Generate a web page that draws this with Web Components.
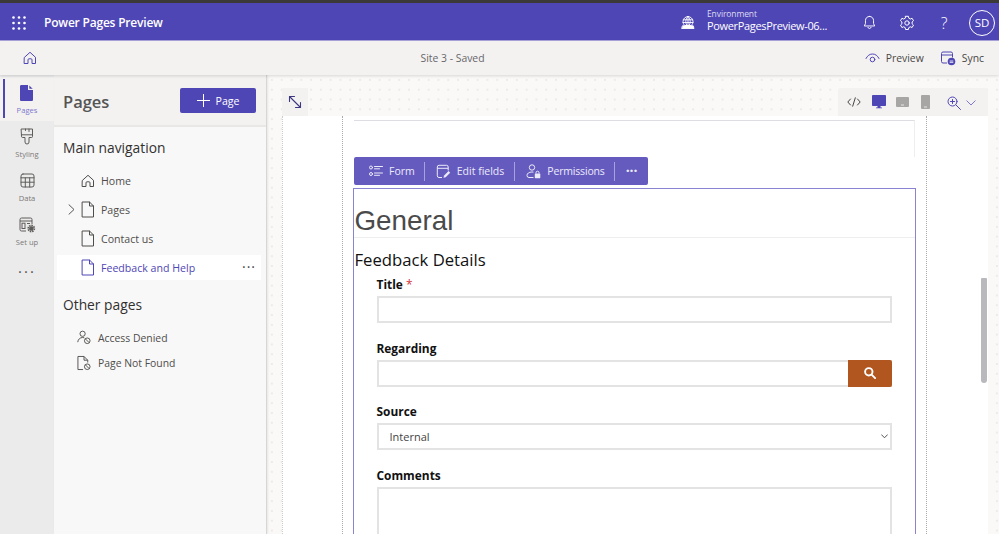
<!DOCTYPE html>
<html lang="en"><head><meta charset="utf-8"><title>Power Pages</title>
<style>
html,body{margin:0;padding:0;height:100%;overflow:hidden;background:#fff}
body{font-family:"Open Sans","Noto Sans",sans-serif;color:#323130}
</style></head><body>
<pp-app></pp-app>
<script>
const S='fill="none" stroke="currentColor" stroke-linecap="round" stroke-linejoin="round"';
const I={
 waffle:`<svg width="14" height="14" viewBox="0 0 14 14" fill="currentColor">${[1.5,7,12.5].flatMap(y=>[1.5,7,12.5].map(x=>`<circle cx="${x}" cy="${y}" r="1.3"/>`)).join('')}</svg>`,
 globe:`<svg width="16" height="16" viewBox="0 0 16 16" ${S} stroke-width=".9"><path d="M8 1.500a5 5 0 0 1 5 5c0 1.700-.7 3-1.800 4H4.800C3.700 9.500 3 8.200 3 6.500a5 5 0 0 1 5-5z"/><path d="M8 1.500C6.500 2.800 5.800 4.600 5.800 6.500s.5 3 1.100 4M8 1.500c1.500 1.300 2.200 3.100 2.200 5s-.5 3-1.100 4M8 1.500v9M3.300 4.800h9.400M3 7.500h10"/><path d="M2.800 10.800h10.400l.8 2.700H2z" fill="currentColor"/></svg>`,
 bell:`<svg width="15" height="15" viewBox="0 0 16 16" ${S}><path d="M8 1.500c-2.700 0-4.300 2-4.300 4.500v3L2.500 11.700h11L12.300 9V6c0-2.500-1.600-4.500-4.300-4.500z"/><path d="M6.300 13.200a1.800 1.800 0 0 0 3.400 0"/></svg>`,
 gear:`<svg width="16" height="16" viewBox="0 0 16 16" ${S}><circle cx="8" cy="8" r="2.200"/><path d="M6.600 1.300h2.800l.4 1.900 1.500.8 1.800-.7 1.400 2.400-1.400 1.300v1.800l1.400 1.300-1.400 2.400-1.800-.7-1.500.8-.4 1.900H6.600l-.4-1.900-1.500-.8-1.800.7-1.400-2.400 1.400-1.300V7.000L1.500 5.700l1.400-2.400 1.800.7 1.500-.8z"/></svg>`,
 home:`<svg width="14" height="14" viewBox="0 0 14 14" ${S}><path d="M1.500 6.300 7 1.300l5.500 5v6.200H9V8.800a1 1 0 0 0-1-1H6a1 1 0 0 0-1 1v3.700H1.500z"/></svg>`,
 eye:`<svg width="15" height="12" viewBox="0 0 15 12" ${S}><path d="M1 6.500C2.500 3.500 4.800 2 7.500 2S12.500 3.500 14 6.500"/><circle cx="7.500" cy="7.500" r="2.300"/></svg>`,
 sync:`<svg width="16" height="16" viewBox="0 0 16 16"><path d="M12.500 7.500V3.500a1.500 1.500 0 0 0-1.500-1.500H3A1.500 1.500 0 0 0 1.500 3.500v8A1.500 1.500 0 0 0 3 13h4M1.500 5h11" fill="none" stroke="currentColor"/><circle cx="11.500" cy="11.500" r="3.800" fill="currentColor"/><path d="M9.700 11h3.600M9.700 12.400h3.600" stroke="#fff" stroke-width=".8"/></svg>`,
 page:`<svg width="14" height="17" viewBox="0 0 14 17" ${S}><path d="M1.500 1h7l4 4v11h-11z"/><path d="M8.500 1v4h4"/></svg>`,
 pageFill:`<svg width="14" height="16" viewBox="0 0 14 16" fill="currentColor"><path d="M1.300 0H8v4.200c0 .5.400.9.900.900H13v9.600c0 .7-.6 1.300-1.300 1.300H1.300C.6 16 0 15.400 0 14.700V1.300C0 .6.600 0 1.300 0z"/><path d="M9.300.4 12.700 3.800H9.300z"/></svg>`,
 brush:`<svg width="14" height="17" viewBox="0 0 14 17" ${S}><path d="M1.500 1h11v7.500a1 1 0 0 1-1 1H9v4.500a2 2 0 0 1-4 0V9.500H2.500a1 1 0 0 1-1-1z"/><path d="M1.500 6.800h11M9 1v2.500M5.500 1v1.500"/></svg>`,
 table:`<svg width="15" height="15" viewBox="0 0 15 15" ${S}><rect x="1" y="1" width="13" height="13" rx="2"/><path d="M1 4.800h13M1 9.200h13M5.300 4.800V14M9.700 4.800V14"/></svg>`,
 setup:`<svg width="17" height="16" viewBox="0 0 17 16"><g fill="none" stroke="currentColor"><path d="M7 14H2.500A1.500 1.500 0 0 1 1 12.500v-10A1.500 1.500 0 0 1 2.500 1h9A1.500 1.500 0 0 1 13 2.500V7M1 4h12"/><rect x="3" y="6.200" width="3" height="5.300"/><path d="M8 6.500h3"/></g><circle cx="12.300" cy="11.500" r="3" fill="none" stroke="currentColor" stroke-width="1.800" stroke-dasharray="1.500 .8"/><circle cx="12.300" cy="11.500" r="2.200" fill="currentColor"/></svg>`,
 plus:`<svg width="13" height="13" viewBox="0 0 13 13" ${S}><path d="M6.500 0v13M0 6.500h13"/></svg>`,
 chev:`<svg width="7" height="11" viewBox="0 0 7 11" ${S}><path d="M1 .8 6 5.500 1 10.200"/></svg>`,
 user:`<svg width="15" height="15" viewBox="0 0 15 15"><g fill="none" stroke="currentColor"><circle cx="6" cy="3.500" r="2.800"/><path d="M.8 12.500c.3-3 2.400-5 5.200-5 .7 0 1.300.1 1.800.3"/><circle cx="11" cy="11" r="3"/><path d="m9 9 4 4"/></g></svg>`,
 pageBlock:`<svg width="15" height="16" viewBox="0 0 15 16"><g fill="none" stroke="currentColor"><path d="M6.500 15H1V1h6.500L11.500 5v2.500M7.500 1v4h4"/><circle cx="11" cy="12" r="3"/><path d="m9 10 4 4"/></g></svg>`,
 expand:`<svg width="14" height="14" viewBox="0 0 14 14" ${S} stroke-width="1.100"><path d="M1.500 1.500 12.500 12.500M1.500 6.500v-5h5M12.500 7.500v5h-5"/></svg>`,
 code:`<svg width="14" height="10" viewBox="0 0 14 10" ${S}><path d="M3.500 2 .8 5l2.700 3M10.500 2l2.700 3-2.700 3M8.300.8 5.700 9.200"/></svg>`,
 desktop:`<svg width="14" height="14" viewBox="0 0 14 14" fill="currentColor"><rect width="14" height="11" rx=".8"/><path d="M5.500 11h3v1.500h-3zM4 12.500h6v.7H4z"/></svg>`,
 tablet:`<svg width="13" height="10" viewBox="0 0 13 10"><rect width="13" height="10" rx="1" fill="currentColor"/><path d="M5 8h3" stroke="#fff" stroke-width=".7"/></svg>`,
 phone:`<svg width="9" height="14" viewBox="0 0 9 14"><rect width="9" height="14" rx="1" fill="currentColor"/><path d="M3 12h3" stroke="#fff" stroke-width=".7"/></svg>`,
 zoom:`<svg width="14" height="14" viewBox="0 0 14 14" ${S}><circle cx="5.500" cy="5.500" r="4.500"/><path d="M9 9l4.500 4.500M3.500 5.500h4M5.500 3.500v4"/></svg>`,
 down:`<svg width="10" height="6" viewBox="0 0 10 6" ${S}><path d="M.8.800 5 5 9.200.800"/></svg>`,
 ddown:`<svg width="7" height="5" viewBox="0 0 7 5" ${S}><path d="M.6.800 3.500 3.800 6.400.800"/></svg>`,
 form:`<svg width="14" height="12" viewBox="0 0 14 12" ${S}><circle cx="2" cy="2.500" r="1.500"/><circle cx="2" cy="9" r="1.500"/><path d="M5.500 1.500h8M5.500 3.800h5M5.500 8h8M5.500 10.300h5"/></svg>`,
 edit:`<svg width="15" height="15" viewBox="0 0 15 15"><path d="M6 13.500H3A1.700 1.700 0 0 1 1.300 11.800V3A1.700 1.700 0 0 1 3 1.300h7.500A1.700 1.700 0 0 1 12.200 3v3.500M1.300 4.300h10.900" fill="none" stroke="currentColor"/><path d="M7.500 13.800l.6-2.200 4.500-4.500 1.600 1.600-4.500 4.500z" fill="currentColor"/></svg>`,
 perm:`<svg width="15" height="15" viewBox="0 0 15 15"><g fill="none" stroke="currentColor"><circle cx="6" cy="3.500" r="2.700"/><path d="M7.500 13.500H3A2 2 0 0 1 1 11.500c0-2 1.800-3.500 5-3.500.5 0 1 0 1.500.1"/><path d="M10 9.500V8.700a1.500 1.500 0 0 1 3 0v.8"/></g><rect x="8.800" y="9.500" width="5.500" height="4.700" rx=".6" fill="currentColor"/></svg>`,
 search:`<svg width="12" height="12" viewBox="0 0 12 12" fill="none" stroke="currentColor" stroke-width="1.900"><circle cx="4.800" cy="4.800" r="3.700"/><path d="m7.600 7.600 3.500 3.500" stroke-linecap="round"/></svg>`
};
function def(name,css,html,init){
 customElements.define(name,class extends HTMLElement{
  connectedCallback(){
   if(this.shadowRoot)return;
   const r=this.attachShadow({mode:'open'});
   r.innerHTML=`<style>${css}</style>`+(typeof html==='function'?html(this):html);
   if(init)init(r,this);
  }
 });
}
const a=(e,n,d='')=>e.getAttribute(n)??d;

def('pp-icon',':host{display:inline-flex;align-items:center;justify-content:center;line-height:0}',e=>I[a(e,'name')]);

def('pp-header',`
:host{display:flex;align-items:center;height:35px;padding-top:2px;background:#4f46b5;color:#fff;border-top:3px solid #3b3a39;border-bottom:1px solid #a9a4dc;flex:none}
.waffle{margin-left:12px;width:14px}
.brand{margin-left:18px;font-size:12px;letter-spacing:-.2px;font-weight:600;flex:1}
.env{display:flex;align-items:center;gap:11px;width:181px}
.env div{display:flex;flex-direction:column;margin-top:-5px}
.l{font-size:8.5px;line-height:11px;color:#dcdaf2;letter-spacing:-.1px}
.v{font-size:11px;letter-spacing:-.33px;line-height:14px;white-space:nowrap}
.ic{display:flex;align-items:center;gap:21.500px;margin-right:4px}
.ic pp-icon{width:16px}
.av{width:24px;height:24px;margin-left:-4.500px;border:1px solid #fff;border-radius:50%;display:flex;align-items:center;justify-content:center;font-size:11.500px;font-weight:500}
.q{font-size:16px;font-weight:300;line-height:16px;width:16px;text-align:center}
`,`<pp-icon class="waffle" name="waffle"></pp-icon><span class="brand">Power Pages Preview</span>
<div class="env"><pp-icon name="globe"></pp-icon><div><span class="l">Environment</span><span class="v">PowerPagesPreview-06...</span></div></div>
<div class="ic"><pp-icon name="bell"></pp-icon><pp-icon name="gear"></pp-icon><span class="q">?</span><span class="av">SD</span></div>`);

def('pp-commandbar',`
:host{display:grid;grid-template-columns:1fr auto 1fr;align-items:center;height:34px;background:#f3f2f1;flex:none;position:relative;z-index:2;box-shadow:0 1px 3px rgba(0,0,0,.14);font-size:10.4px;color:#605e5c}
.home{margin-left:23px;color:#4f46b5;justify-self:start}
.site{margin-right:94px;color:#69676a}
.r{justify-self:end;display:flex;align-items:center;margin-right:15px;color:#4a4846}
.r pp-icon{color:#4f46b5;margin-right:6px}
.r span{margin-right:16px}.r span:last-child{margin-right:0}
`,`<pp-icon class="home" name="home"></pp-icon><span class="site">Site 3 - Saved</span>
<div class="r"><pp-icon name="eye"></pp-icon><span>Preview</span><pp-icon name="sync"></pp-icon><span>Sync</span></div>`);

def('pp-rail-item',`
:host{display:flex;flex-direction:column;align-items:center;height:44px;padding-top:7px;box-sizing:border-box;color:#5f5d5b;font-size:7.6px;position:relative;gap:3px}
:host([active]){background:#f3f2f1;color:#4f46b5}
:host([active])::before{content:"";position:absolute;left:3px;top:2px;bottom:3px;width:2px;background:#4f46b5}
:host([active]) span{color:#7f78cc}
span{line-height:10px;color:#7b7977}
pp-icon{height:18px}
`,e=>`<pp-icon name="${a(e,'icon')}"></pp-icon><span><slot></slot></span>`);

def('pp-rail',`
:host{display:flex;flex-direction:column;width:54px;background:#ebebeb;flex:none;padding-top:1.500px}
.more{height:20px;margin-top:12px;text-align:center;font-size:15px;letter-spacing:2px;color:#555;line-height:12px}
`,`<slot></slot><div class="more">···</div>`);

def('pp-nav-item',`
:host{display:flex;align-items:center;height:25px;margin:0 5px 4px 3px;padding-left:24px;font-size:10.6px;color:#4f4d4b;position:relative}
:host([active]){background:#fff;color:#4f46b5}
:host([other]){padding-left:20px;margin-bottom:0;font-size:10.4px}
pp-icon{width:14px;margin-right:7px;flex:none}
:host(:not([other])) pp-icon:not(.c){margin-right:6px}
.c{position:absolute;left:7px;color:#555}
.m{position:absolute;right:5px;top:7px;font-size:14px;line-height:10px;color:#444;letter-spacing:1px}
`,e=>`${e.hasAttribute('exp')?`<pp-icon class="c" name="chev"></pp-icon>`:''}<pp-icon name="${a(e,'icon')}"></pp-icon><span><slot></slot></span>${e.hasAttribute('active')?'<span class="m">···</span>':''}`);

def('pp-panel',`
:host{display:flex;flex-direction:column;width:212px;flex:none;background:#f8f8f8;border-right:1px solid #d8d6d4;box-shadow:1px 0 2px rgba(0,0,0,.08);position:relative;z-index:1}
.h{height:52px;box-sizing:border-box;display:flex;align-items:center;justify-content:space-between;padding:2px 10px 0 9px;background:#f3f2f1;border-bottom:2px solid #e8e7e6;flex:none}
h1{margin:0;font-size:16.5px;font-weight:600;color:#555}
.b{width:76px;height:25px;box-sizing:border-box;margin-top:-1px;background:#4f46b5;color:#fff;border-radius:2px;font-size:10.6px;font-weight:500;display:flex;align-items:center;justify-content:center;gap:6px}
h2{margin:0 0 0 9px;font-size:13.8px;font-weight:500;color:#323130;line-height:20px}
.m{margin-top:11px;margin-bottom:10px}
.o{margin-top:11px;margin-bottom:10px}
`,`<div class="h"><h1>Pages</h1><div class="b"><pp-icon name="plus"></pp-icon>Page</div></div>
<h2 class="m">Main navigation</h2><slot name="main"></slot><h2 class="o">Other pages</h2><slot name="other"></slot>`);

def('pp-form-toolbar',`
:host{display:flex;align-items:center;height:28px;width:294px;box-sizing:border-box;background:#655bbf;border-radius:2px;font-size:10.5px;color:#eceaf8;padding-left:15px;flex:none}
div{display:flex;align-items:center;gap:6px;height:22px}
i{width:1px;height:19px;background:#a7a2dc;display:block}
.a{margin-right:9px}
.c{margin:0 10px 0 11px}
.b{margin:0 9px 0 11px;letter-spacing:-.18px}
.d{font-size:14px;font-weight:700;margin-left:11px;line-height:10px}
`,`<div class="a"><pp-icon name="form"></pp-icon>Form</div><i></i><div class="c"><pp-icon name="edit"></pp-icon>Edit fields</div><i></i><div class="b"><pp-icon name="perm"></pp-icon>Permissions</div><i></i><span class="d">···</span>`);

def('pp-field',`
:host{display:block;font-size:11.900px;font-weight:700;color:#111;margin-bottom:16.700px}
.l{display:block;line-height:17px;margin-bottom:3px}
.req{color:#d13438;font-weight:400}
.box{display:flex;box-sizing:border-box;height:27px;border:2px solid #e3e3e3;background:#fff;font-weight:400;font-size:11px;color:#444;align-items:center;position:relative;padding-left:11px}
:host([tall]) .box{height:80px}
.lk{margin-left:auto;margin-right:-2px;width:44px;height:27px;background:#b1561f;color:#fff;border-radius:0 2px 2px 0;display:flex;align-items:center;justify-content:center}
.dd{margin-left:auto;margin-right:2px;color:#555}
`,e=>`<span class="l">${a(e,'label')}${e.hasAttribute('required')?' <span class="req">*</span>':''}</span>
<div class="box">${a(e,'value')}${a(e,'kind')==='lookup'?'<div class="lk"><pp-icon name="search"></pp-icon></div>':''}${a(e,'kind')==='select'?'<pp-icon class="dd" name="ddown"></pp-icon>':''}</div>`);

def('pp-form',`
:host{display:block;border:1.500px solid #8a83d2;margin:3px -1px 0 -1.500px;padding-top:14px;background:#fff;height:500px}
.g{font:27.800px/36px "Liberation Sans",Arial,sans-serif;color:#4a4a4a;padding-left:1px;margin:0;height:34px;border-bottom:1px solid #eee}
.d{font-size:16.700px;font-weight:400;color:#111;line-height:22px;margin-top:11px;padding-left:1px}
.f{padding:0 23px;margin-top:5px}
`,`<h1 class="g" style="font-weight:400">General</h1><div class="d">Feedback Details</div><div class="f"><slot></slot></div>`);

def('pp-canvas',`
:host{display:block;flex:1;min-width:0;position:relative;overflow:hidden;padding:41px 11px 0 15px;background-color:#faf9f8;background-image:radial-gradient(circle,#ecebe8 .7px,transparent 1px);background-size:9.800px 9.800px}
.frame{background:#fff;height:500px;padding:0 61px 0 59px;border-left:1px dotted #ccc;position:relative}
.lane{border-left:1px dotted #aaa;border-right:1px dotted #aaa;height:100%;padding:4px 11px 0 11px;box-sizing:border-box}
.hr{border-top:1.500px solid #dedde2;border-right:1px solid #eee;height:36px}
.exp{position:absolute;left:15px;top:13px;width:26px;height:28px;background:#f3f2f1;display:flex;align-items:center;justify-content:center;color:#3c3780}
.dev{position:absolute;right:11px;top:13px;width:150px;height:28px;background:#f3f2f1;border-radius:3px 3px 0 0;box-sizing:border-box;display:flex;align-items:center;padding-left:10px}
.dev pp-icon{position:absolute;top:7px}
.sb{position:absolute;right:12px;top:203px;width:6px;height:105px;background:#b9b8bd;border-radius:1px 1px 3px 3px}
`,`<div class="frame"><div class="lane"><div class="hr"></div><pp-form-toolbar></pp-form-toolbar><pp-form><slot></slot></pp-form></div></div>
<div class="exp"><pp-icon name="expand"></pp-icon></div>
<div class="dev">
<pp-icon name="code" style="left:9px;top:9px;color:#444"></pp-icon>
<pp-icon name="desktop" style="left:34px;top:7px;color:#4f46b5"></pp-icon>
<pp-icon name="tablet" style="left:58px;top:9px;color:#a8a6a4"></pp-icon>
<pp-icon name="phone" style="left:83px;top:7px;color:#a8a6a4"></pp-icon>
<pp-icon name="zoom" style="left:109px;top:8px;color:#4f46b5"></pp-icon>
<pp-icon name="down" style="left:128px;top:12px;color:#7f78cc"></pp-icon>
</div><div class="sb"></div>`);

def('pp-app',`
:host{display:flex;flex-direction:column;width:999px;height:534px;overflow:hidden}
.main{display:flex;flex:1;min-height:0}
`,`<pp-header></pp-header><pp-commandbar></pp-commandbar>
<div class="main">
<pp-rail>
 <pp-rail-item active icon="pageFill">Pages</pp-rail-item>
 <pp-rail-item icon="brush">Styling</pp-rail-item>
 <pp-rail-item icon="table">Data</pp-rail-item>
 <pp-rail-item icon="setup">Set up</pp-rail-item>
</pp-rail>
<pp-panel>
 <pp-nav-item slot="main" icon="home">Home</pp-nav-item>
 <pp-nav-item slot="main" icon="page" exp>Pages</pp-nav-item>
 <pp-nav-item slot="main" icon="page">Contact us</pp-nav-item>
 <pp-nav-item slot="main" icon="page" active>Feedback and Help</pp-nav-item>
 <pp-nav-item slot="other" icon="user" other>Access Denied</pp-nav-item>
 <pp-nav-item slot="other" icon="pageBlock" other>Page Not Found</pp-nav-item>
</pp-panel>
<pp-canvas>
 <pp-field label="Title" required></pp-field>
 <pp-field label="Regarding" kind="lookup"></pp-field>
 <pp-field label="Source" kind="select" value="Internal"></pp-field>
 <pp-field label="Comments" tall></pp-field>
</pp-canvas>
</div>`);
</script>
</body></html>
